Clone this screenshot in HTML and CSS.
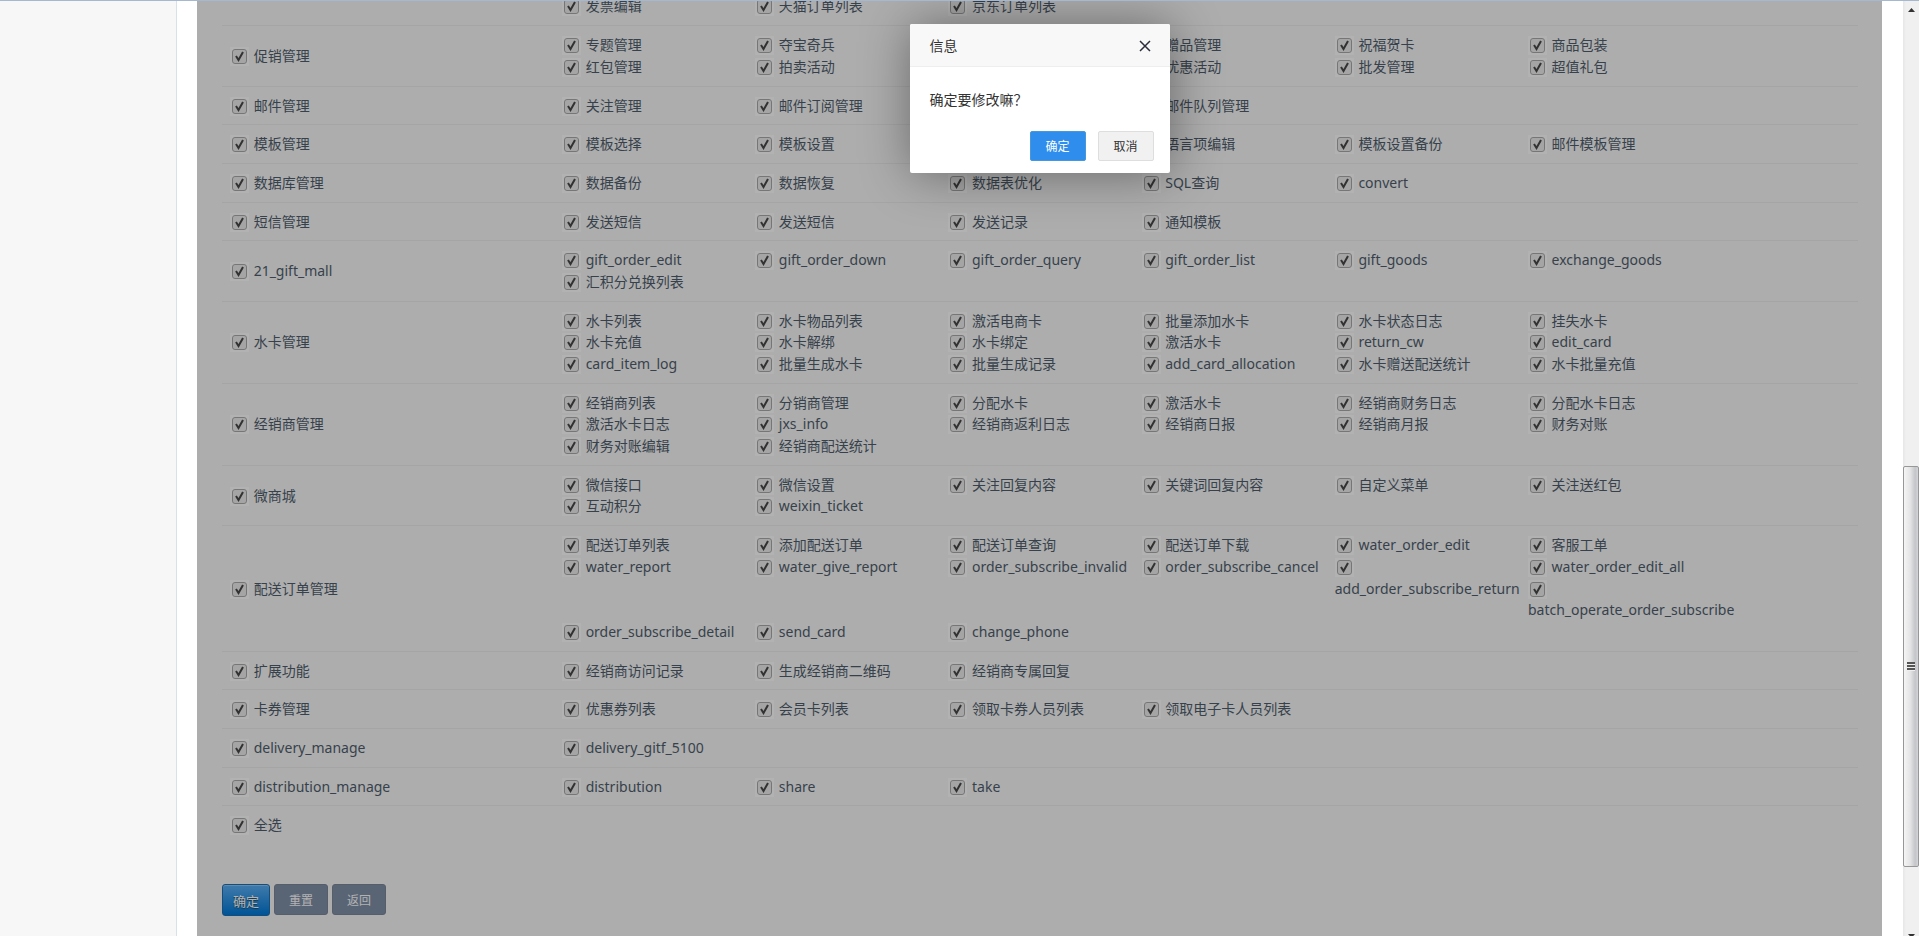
FILE: index.html
```
<!DOCTYPE html>
<html lang="zh-CN">
<head>
<meta charset="utf-8">
<title>权限管理</title>
<link rel="stylesheet" href="styles.css">
</head>
<body>
<div class="app">
  <aside class="sidebar"></aside>
  <main class="frame">
    <form class="content">
      <table class="perms"><tbody id="perms"></tbody></table>
      <div class="actions">
        <button type="button" class="btn btn-primary">确定</button>
        <button type="reset" class="btn">重置</button>
        <button type="button" class="btn">返回</button>
      </div>
    </form>
    <div class="shade">
      <section class="dialog" role="dialog" aria-labelledby="dialog-title">
        <header class="dialog-head">
          <h2 class="dialog-title" id="dialog-title">信息</h2>
          <button type="button" class="dialog-close" aria-label="关闭">
            <svg width="12" height="12" viewBox="0 0 12 12"><path d="M1 1L11 11M11 1L1 11" stroke="#2d2c3b" stroke-width="1.5" fill="none"/></svg>
          </button>
        </header>
        <p class="dialog-body">确定要修改嘛？</p>
        <footer class="dialog-foot">
          <button type="button" class="dbtn dbtn-ok">确定</button>
          <button type="button" class="dbtn">取消</button>
        </footer>
      </section>
    </div>
  </main>
  <div class="scrollbar" aria-hidden="true">
    <div class="sb-arrow"><svg width="7" height="4" viewBox="0 0 7 4"><path d="M0 4L3.500 0L7 4Z" fill="#333"/></svg></div>
    <div class="sb-before"></div>
    <div class="sb-thumb"><svg width="8" height="9" viewBox="0 0 8 9"><path d="M0 1H8M0 4H8M0 7H8" stroke="#555" stroke-width="2"/><path d="M0 2.500H8M0 5.500H8M0 8.500H8" stroke="#eee"/></svg></div>
    <div class="sb-after"></div>
    <div class="sb-end"><svg width="7" height="4" viewBox="0 0 7 4"><path d="M0 0H7L3.500 4Z" fill="#333"/></svg></div>
  </div>
</div>
<script src="perms.js"></script>
</body>
</html>
```

FILE: perms.js
```
// Each group is [title, items]; "-" leaves a cell of the item grid empty.
const groups = [
  ["-", "发票编辑 天猫订单列表 京东订单列表"],
  ["促销管理", "专题管理 夺宝奇兵 - 赠品管理 祝福贺卡 商品包装 红包管理 拍卖活动 - 优惠活动 批发管理 超值礼包"],
  ["邮件管理", "关注管理 邮件订阅管理 - 邮件队列管理"],
  ["模板管理", "模板选择 模板设置 - 语言项编辑 模板设置备份 邮件模板管理"],
  ["数据库管理", "数据备份 数据恢复 数据表优化 SQL查询 convert"],
  ["短信管理", "发送短信 发送短信 发送记录 通知模板"],
  ["21_gift_mall", "gift_order_edit gift_order_down gift_order_query gift_order_list gift_goods exchange_goods 汇积分兑换列表"],
  ["水卡管理", "水卡列表 水卡物品列表 激活电商卡 批量添加水卡 水卡状态日志 挂失水卡 水卡充值 水卡解绑 水卡绑定 激活水卡 return_cw edit_card card_item_log 批量生成水卡 批量生成记录 add_card_allocation 水卡赠送配送统计 水卡批量充值"],
  ["经销商管理", "经销商列表 分销商管理 分配水卡 激活水卡 经销商财务日志 分配水卡日志 激活水卡日志 jxs_info 经销商返利日志 经销商日报 经销商月报 财务对账 财务对账编辑 经销商配送统计"],
  ["微商城", "微信接口 微信设置 关注回复内容 关键词回复内容 自定义菜单 关注送红包 互动积分 weixin_ticket"],
  ["配送订单管理", "配送订单列表 添加配送订单 配送订单查询 配送订单下载 water_order_edit 客服工单 water_report water_give_report order_subscribe_invalid order_subscribe_cancel add_order_subscribe_return water_order_edit_all batch_operate_order_subscribe order_subscribe_detail send_card change_phone"],
  ["扩展功能", "经销商访问记录 生成经销商二维码 经销商专属回复"],
  ["卡券管理", "优惠券列表 会员卡列表 领取卡券人员列表 领取电子卡人员列表"],
  ["delivery_manage", "delivery_gitf_5100"],
  ["distribution_manage", "distribution share take"],
  ["全选", ""]
];

const option = name => name === "-"
  ? `<span class="perm">&nbsp;</span>`
  : `<label class="perm"><input type="checkbox" class="tick" checked> ${name}</label>`;

document.getElementById("perms").innerHTML = groups.map(([title, items]) =>
  `<tr><th class="group" scope="row">${option(title)}</th><td class="items">${
    items.split(" ").filter(Boolean).map(option).join("")
  }</td></tr>`).join("");
```

FILE: styles.css
```
* {
  box-sizing: border-box;
}

body {
  margin: 0;
  font: 14px/1.55 "Noto Sans", "Noto Sans CJK SC", sans-serif;
  color: #505e6e;
}

button {
  font-family: inherit;
  margin: 0;
  padding: 0;
  cursor: pointer;
}

.app {
  display: flex;
  height: 100vh;
  overflow: hidden;
  border-top: 1px solid #a6b8d0;
  background: #fff;
}

.sidebar {
  flex: 0 0 177px;
  background: #f7f7f7;
  border-right: 1px solid #d8e1ea;
}

/* The frame is scrolled near its end, so the rows are packed to the bottom. */
.frame {
  position: relative;
  flex: 1;
  display: flex;
  flex-direction: column;
  justify-content: flex-end;
  margin: 0 21px 0 20px;
  overflow: hidden;
  background: #f8f8f8;
}

.content {
  padding: 0 24px 20px 25px;
}

.perms {
  width: 100%;
  table-layout: fixed;
  border-collapse: separate;
  border-spacing: 0;
}

.group,
.items {
  padding: 8px;
  border-bottom: 1px solid #ededed;
  font-weight: normal;
  text-align: left;
  vertical-align: middle;
}

.group {
  width: 332px;
}

tr:last-child > * {
  border-bottom: 0;
}

.items::after {
  content: "";
  display: block;
  clear: both;
}

.items .perm {
  float: left;
  width: 15%;
}

.tick {
  appearance: none;
  width: 19px;
  height: 19px;
  margin: 0 1px 0 0;
  vertical-align: top;
  position: relative;
  top: 2px;
  background: #fff url("data:image/svg+xml,%3Csvg xmlns='http://www.w3.org/2000/svg' width='19' height='19'%3E%3Crect x='2.500' y='2.500' width='14' height='14' rx='2.500' fill='%23ededed' stroke='%23aaaaaa'/%3E%3Cpath d='M6 9L8.500 13L13 5' fill='none' stroke='%23484848' stroke-width='2'/%3E%3C/svg%3E");
}

.actions {
  display: flex;
  align-items: flex-start;
  gap: 4px;
  margin-top: 40px;
}

.btn {
  width: 54px;
  height: 31px;
  border: 1px solid #7b8798;
  border-radius: 3px;
  background: #8090a8;
  color: #fff;
  font-size: 12px;
}

.btn-primary {
  width: 48px;
  height: 32px;
  border-color: #1f6fb0;
  background: linear-gradient(#5cb0f5, #0078d8);
  box-shadow: inset 0 1px 0 #8cc6f6;
  font-size: 13px;
  text-shadow: 0 1px 1px #245;
}

.shade {
  position: absolute;
  inset: 0;
  display: flex;
  justify-content: center;
  align-items: flex-start;
  padding-top: 23px;
  background: rgba(0, 0, 0, .3);
}

.dialog {
  width: 260px;
  border-radius: 2px;
  background: #fff;
  box-shadow: 1px 1px 50px rgba(0, 0, 0, .4);
  color: #333;
}

.dialog-head {
  display: flex;
  justify-content: space-between;
  align-items: center;
  height: 43px;
  padding: 2px 19px 0 20px;
  border-bottom: 1px solid #eee;
  border-radius: 2px 2px 0 0;
  background: #f8f8f8;
}

.dialog-title {
  margin: 0;
  font-size: 14px;
  font-weight: normal;
}

.dialog-close {
  display: flex;
  border: 0;
  background: none;
}

.dialog-body {
  margin: 0;
  padding: 21px 20px 19px;
  line-height: 24px;
}

.dialog-foot {
  display: flex;
  justify-content: flex-end;
  gap: 12px;
  padding: 0 16px 12px;
}

.dbtn {
  width: 56px;
  height: 30px;
  border: 1px solid #dedede;
  border-radius: 2px;
  background: #f1f1f1;
  color: #333;
  font-size: 12px;
}

.dbtn-ok {
  border-color: #4898d5;
  background: #2e8ded;
  color: #fff;
}

.scrollbar {
  flex: 0 0 16px;
  display: flex;
  flex-direction: column;
  background: linear-gradient(90deg, #e6e6e6, #f0f0f0 3px);
}

.sb-arrow,
.sb-thumb,
.sb-end {
  display: flex;
  justify-content: center;
  align-items: center;
}

.sb-arrow {
  height: 17px;
}

.sb-before {
  flex: 449;
}

.sb-thumb {
  flex: 400;
  border: 1px solid #979797;
  border-radius: 2px;
  background: linear-gradient(90deg, #f5f5f5, #e4e4e6 45%, #c4c5c9 80%, #d4d4d8);
}

.sb-after {
  flex: 67;
}

.sb-end {
  height: 2px;
  align-items: flex-start;
}
```
